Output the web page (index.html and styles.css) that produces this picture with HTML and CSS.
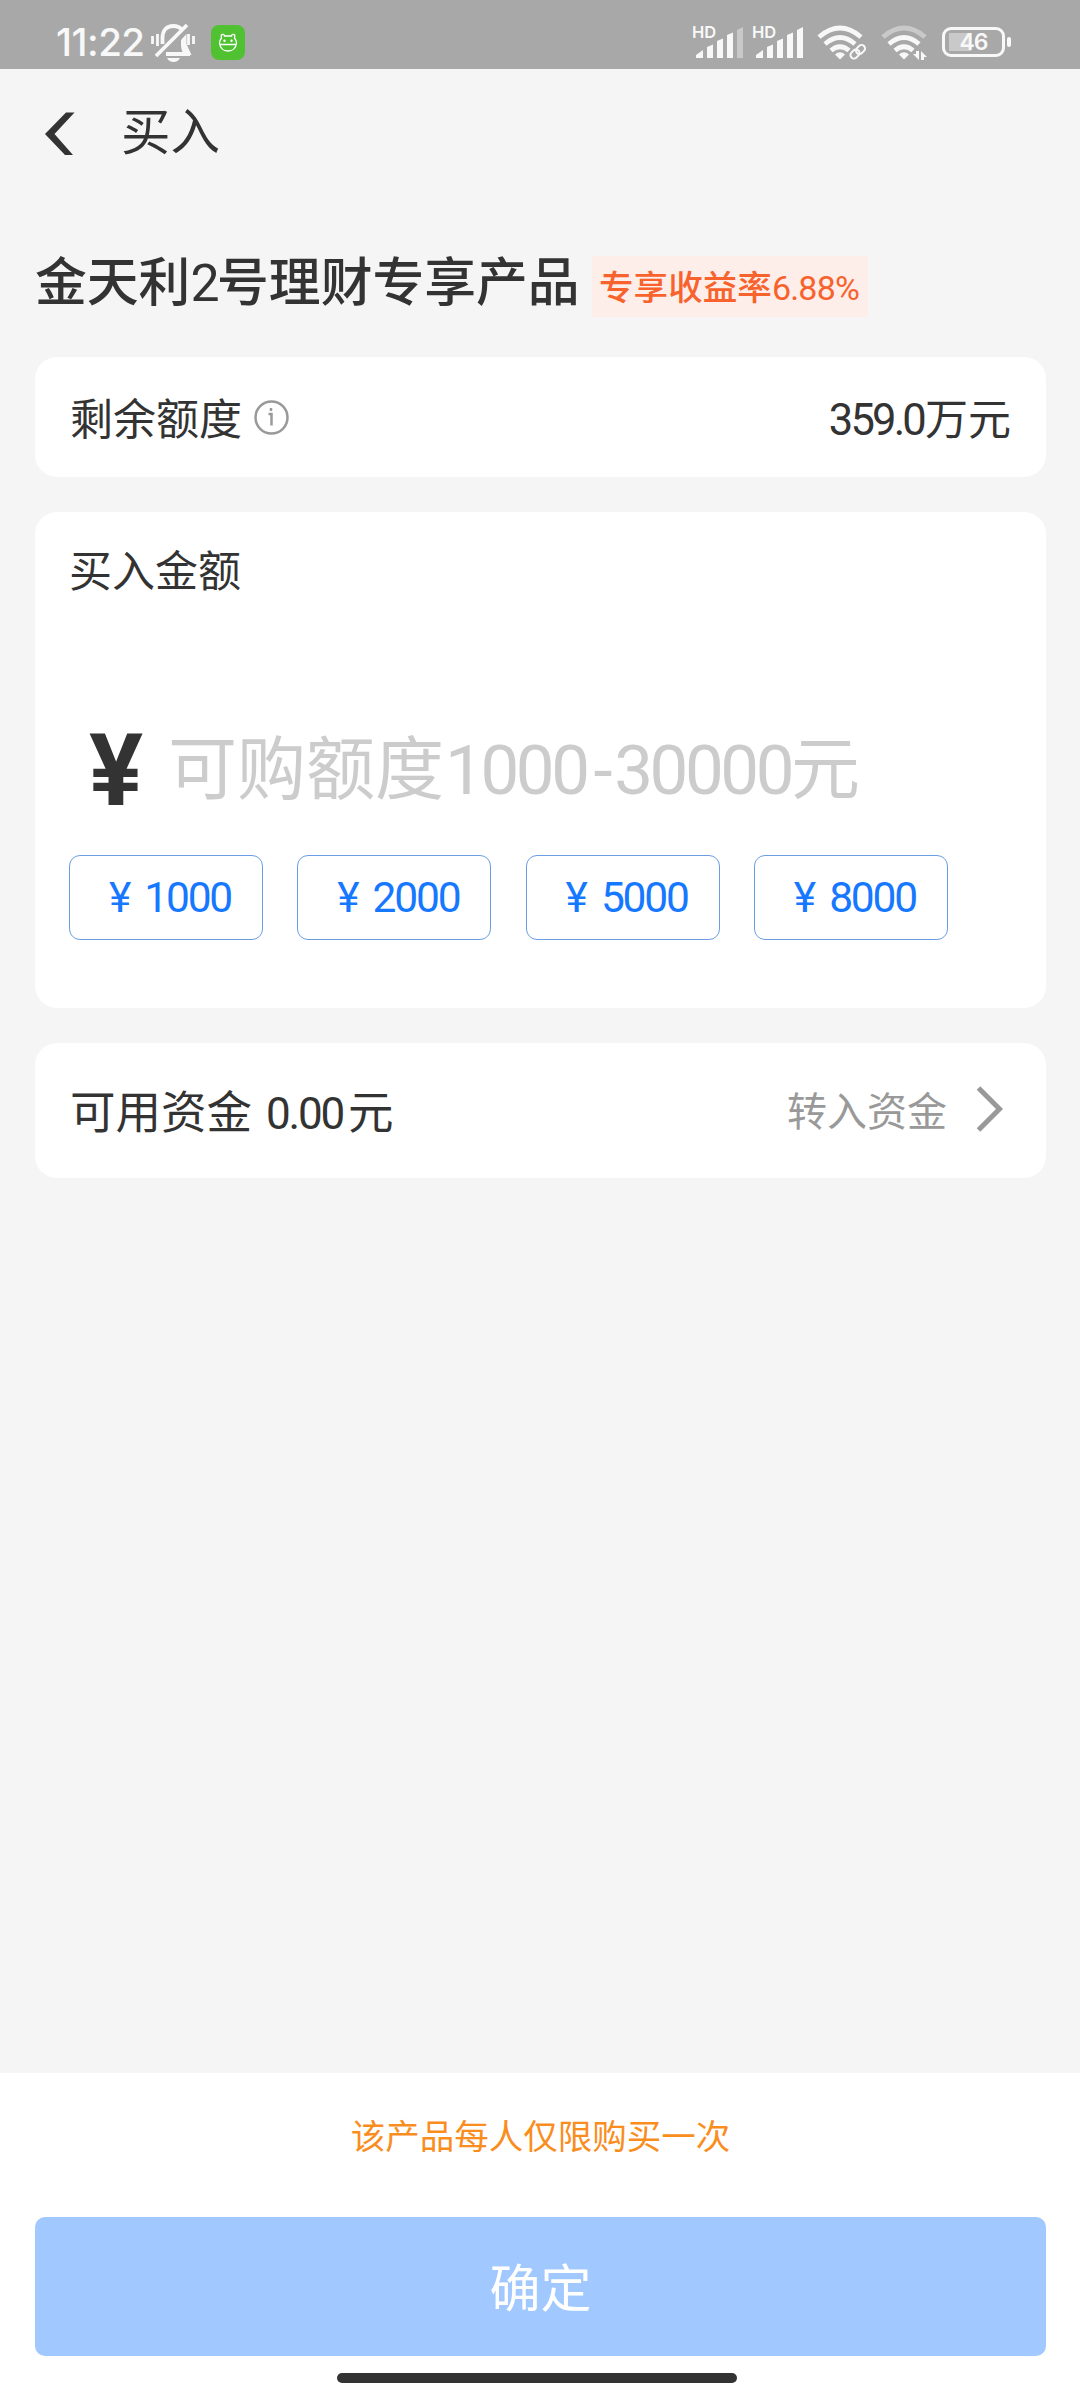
FILE: index.html
```html
<!DOCTYPE html>
<html lang="zh-CN">
<head>
<meta charset="utf-8">
<title>买入</title>
<link rel="stylesheet" href="styles.css">
</head>
<body>
<div class="screen">
  <div class="status">
    <span class="clock">11:22</span>
    <svg class="bell" width="46" height="42" viewBox="150 22 46 42" fill="none" stroke="#f8f8f8" stroke-width="3.8">
      <path d="M162.500 44V38C162.500 30 167 26 173 26C177 26 180 27 182 30M187 25L156 56M190 54H166"/>
      <path d="M181 40L186.500 34V44L191.500 55H184Q181 50 181 46Z" fill="#f8f8f8" stroke="none"/>
      <path d="M152.500 36v8M157.500 34v12M188.500 34v11M193.500 36v8" stroke-width="2.800"/>
      <path d="M167 58h13q-2 4-6.500 4t-6.500-4z" fill="#f8f8f8" stroke="none"/>
    </svg>
    <svg class="app" width="34" height="35" viewBox="0 0 34 35" fill="none" stroke="#fff" stroke-width="1.300">
      <rect width="34" height="35" rx="8" fill="#50c232" stroke="none"/>
      <path d="M10.500 13Q9.500 9.500 11.500 9.500Q13 9 13.500 11H20.500Q21 9 22.500 9.500Q24.500 9.500 23.500 13Q25.500 15.500 25.500 18Q24.500 26 17 26Q9.500 26 8.500 18Q8.500 15.500 10.500 13ZM8.500 19.500H25.500"/>
      <circle cx="13.500" cy="15.800" r="1.200" fill="#fff" stroke="none"/><circle cx="20.500" cy="15.800" r="1.200" fill="#fff" stroke="none"/>
    </svg>
    <div class="right">
      <div class="sig"><span class="hd">HD</span>
        <svg width="50" height="34" viewBox="0 0 50 34" fill="#f8f8f8"><path d="M2 31V28L9 23V31ZM13 31V20L19 17.500V31ZM23 31V14L29 11.500V31ZM33 31V8L39 5.500V31Z"/><path d="M43 31V3L49 0V31Z" fill="#c9c9c9"/></svg></div>
      <div class="sig"><span class="hd">HD</span>
        <svg width="50" height="34" viewBox="0 0 50 34" fill="#f8f8f8"><path d="M2 31V28L9 23V31ZM13 31V20L19 17.500V31ZM23 31V14L29 11.500V31ZM33 31V8L39 5.500V31ZM43 31V3L49 0V31Z"/></svg></div>
      <svg class="wifi" width="50" height="36" viewBox="0 0 50 36" fill="none" stroke="#f8f8f8" stroke-width="4.800">
        <path d="M2 12Q23-6 44 12M8 19Q23 6 38 19M14 25.500Q23 18 32 25.500"/><path d="M18 29.500Q23 25 28 29.500L23 34.500Z" fill="#f8f8f8" stroke="none"/>
        <g stroke-width="2"><rect x="33" y="25.500" width="10" height="7" rx="3.500" transform="rotate(-45 38 29)"/><rect x="38.500" y="21" width="10" height="7" rx="3.500" transform="rotate(-45 43.500 24.500)"/></g>
      </svg>
      <svg class="wifi2" width="50" height="36" viewBox="0 0 50 36" fill="none" stroke="#f8f8f8" stroke-width="4.800">
        <path d="M2 12Q23-6 44 12" stroke="#c9c9c9"/><path d="M8 19Q23 6 38 19M14 25.500Q23 18 32 25.500"/><path d="M18 29.500Q23 25 28 29.500L23 34.500Z" fill="#f8f8f8" stroke="none"/>
        <path d="M35 26h3v9l-6-6h3zM40 35v-9l6 6h-3v3z" fill="#f8f8f8" stroke="none"/>
      </svg>
      <div class="battery"><span>46</span></div><i class="tip"></i>
    </div>
  </div>

  <header class="nav">
    <svg width="30" height="44" viewBox="0 0 30 44" fill="#333"><path d="M21 0.500H29.500L9.500 22L28 43H20L0 22Z"/></svg>
    <h1>买入</h1>
  </header>

  <main>
    <div class="product">
      <h2>金天利<span class="num">2</span>号理财专享产品</h2>
      <span class="tag">专享收益率<span class="num">6.88%</span></span>
    </div>

    <section class="card quota">
      <span class="label">剩余额度</span>
      <svg class="info" width="37" height="37" viewBox="0 0 37 37" fill="none" stroke="#999" stroke-width="2.500"><circle cx="18.500" cy="18.500" r="16"/><path d="M15.500 15H18.500V26.500M18 9v3"/></svg>
      <span class="value"><span class="num">359.0</span>万元</span>
    </section>

    <section class="card amount">
      <div class="label">买入金额</div>
      <div class="entry"><span class="yen">¥</span><span class="hint">可购额度<span class="num">1000<span class="dash">-</span>30000</span>元</span></div>
      <div class="chips">
        <div class="chip"><span>¥</span><span class="num">1000</span></div>
        <div class="chip"><span>¥</span><span class="num">2000</span></div>
        <div class="chip"><span>¥</span><span class="num">5000</span></div>
        <div class="chip"><span>¥</span><span class="num">8000</span></div>
      </div>
    </section>

    <section class="card funds">
      <span class="cash">可用资金<span class="num">0.00</span>元</span>
      <span class="transfer">转入资金</span>
      <svg class="chev" width="28" height="46" viewBox="0 0 28 46" fill="none" stroke="#999" stroke-width="5"><path d="M2.500 2L23.500 23L2.500 44"/></svg>
    </section>
  </main>

  <footer>
    <p>该产品每人仅限购买一次</p>
    <div class="confirm">确定</div>
    <div class="home"></div>
  </footer>
</div>
</body>
</html>
```
FILE: styles.css
```css
* { box-sizing: border-box; margin: 0; padding: 0; }
body { font-family: "Noto Sans CJK SC", sans-serif; color: #333; background: #f5f5f5; }
.screen { width: 1080px; height: 2400px; display: flex; flex-direction: column; white-space: nowrap; overflow: hidden; }
.num { font-family: Roboto, sans-serif; font-weight: 400; }
svg { display: block; flex: none; }

.status { height: 69px; background: #a8a8a8; color: #f8f8f8; display: flex; align-items: flex-start; padding-left: 56px; }
.clock { font: 500 38.500px/40px Inter, sans-serif; width: 94px; padding-top: 22px; letter-spacing: -0.500px; }
.bell { margin-top: 22px; }
.app { margin: 25px 0 0 15px; }
.right { margin-left: auto; display: flex; padding-right: 69px; }
.sig { width: 50px; height: 34px; margin: 27px 10px 0 0; position: relative; }
.hd { position: absolute; left: -2px; top: -3px; font: 600 16.500px/17px Inter, sans-serif; }
.wifi { margin: 25px 14px 0 3px; }
.wifi2 { margin: 25px 11px 0 0; }
.battery { width: 63px; height: 30px; margin-top: 27px; border: 3px solid #f8f8f8; border-radius: 9px; background: linear-gradient(#c9c9c9, #c9c9c9) 4px 3px / 22px 18px no-repeat; text-align: center; font: 600 23px/25px Inter, sans-serif; letter-spacing: -1px; }
.tip { width: 4px; height: 10px; margin: 37px 0 0 2px; background: #f8f8f8; border-radius: 2px; }

.nav { height: 131px; display: flex; align-items: center; padding: 0 0 2px 45px; }
.nav svg { margin-top: 1px; }
.nav h1 { font-size: 49.500px; line-height: 60px; font-weight: 400; margin: 0 0 9px 46px; }

main { flex: 1; padding: 0 34px 0 35px; }
.product { height: 157px; display: flex; align-items: flex-start; padding-top: 47px; }
h2 { font-size: 51.800px; line-height: 64px; font-weight: 500; width: 557px; }
h2 .num { letter-spacing: -2.500px; }
.tag { margin-top: 9px; width: 276px; height: 61px; padding-left: 7px; background: #feeeea; color: #f7622d; font-size: 34.600px; line-height: 58px; font-weight: 500; }
.tag .num { font-size: 34px; letter-spacing: -0.800px; }

.card { background: #fff; border-radius: 22px; display: flex; }
.label { font-size: 43px; line-height: 60px; }
.quota { height: 120px; align-items: center; padding: 0 35px; }
.quota .label { margin-bottom: 3px; }
.info { margin-left: 11px; }
.value { margin: 0 0 2px auto; font-size: 43px; }
.value .num { font-size: 43.500px; letter-spacing: -2.800px; margin-right: 1px; }

.amount { height: 496px; margin-top: 35px; padding: 26px 34px; flex-direction: column; }
.entry { height: 100px; margin-top: 119px; display: flex; align-items: center; }
.yen { font: 700 101px/100px Roboto, sans-serif; width: 64px; margin: 8px 0 0 20px; }
.hint { font-size: 69px; line-height: 100px; color: #ccc; margin-left: 15px; }
.hint .num { letter-spacing: -3.400px; margin-left: 1px; }
.dash { margin: 0 5px 0 7px; }
.chips { display: flex; gap: 34.300px; margin-top: 38px; }
.chip { width: 194px; height: 85px; border: 1px solid #6b9de4; border-radius: 11px; color: #1677ff; display: flex; justify-content: center; align-items: center; gap: 13px; font: 400 42.500px/50px Roboto, sans-serif; padding-left: 8px; }
.chip .num { letter-spacing: -2.200px; }

.funds { height: 135px; margin-top: 35px; padding: 0 42px 3px 35px; align-items: center; }
.cash { font-size: 45.500px; }
.cash .num { font-size: 44px; letter-spacing: -2.200px; margin: 0 5px 0 14px; }
.transfer { font-size: 40px; color: #999; margin-left: auto; }
.chev { margin: 0 0 0 29px; }

footer { height: 327px; background: #fff; padding: 0 34px 0 35px; display: flex; flex-direction: column; }
footer p { color: #f98d1e; font-size: 34.500px; line-height: 50px; text-align: center; margin-top: 36px; }
.confirm { margin-top: 58px; height: 139px; border-radius: 10px; background: #a1c8ff; color: #fff; font-size: 51px; line-height: 137px; text-align: center; }
.home { width: 400px; height: 10px; border-radius: 5px; background: #333; margin: 17px 0 0 302px; }
```
